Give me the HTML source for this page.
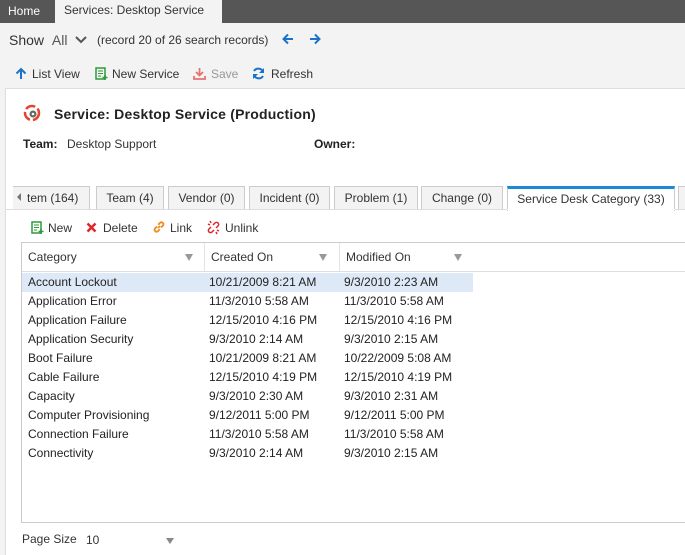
<!DOCTYPE html>
<html><head><style>
*{box-sizing:border-box;margin:0;padding:0}
body{width:685px;height:555px;overflow:hidden;font-family:"Liberation Sans",sans-serif;font-size:12px;color:#222;background:#f3f3f3;position:relative}
.abs{position:absolute;white-space:nowrap}
.top{left:0;top:0;width:685px;height:23px;background:#565656}
.panel{left:5px;top:88px;width:680px;height:467px;background:#fff;border-left:1px solid #ddd;border-top:1px solid #ddd}
.tab{position:absolute;top:186px;height:24px;border:1px solid #ccc;border-bottom:none;background:#f3f3f3;font-size:12px;line-height:22px;text-align:center;color:#333}
.grid{left:21px;top:242px;width:664px;height:281px;border:1px solid #ccc;border-right:none;background:#fff}
.hdr{position:absolute;top:0;height:29px;border-bottom:1px solid #ddd;line-height:29px;padding-left:6px;color:#333}
.row{position:absolute;left:0;height:19px;line-height:19px;width:451px}
.row span{position:absolute}
.filt{position:absolute;top:11px;width:0;height:0;border-left:4px solid transparent;border-right:4px solid transparent;border-top:7px solid #999}
</style></head><body>
<div class="abs top"></div>
<div class="abs" style="left:8px;top:4px;color:#fff;font-size:12px">Home</div>
<div class="abs" style="left:55px;top:0;width:167px;height:23px;background:#f3f3f3;padding:3px 9px;font-size:12px;color:#333">Services: Desktop Service</div>
<div class="abs" style="left:9px;top:32px;font-size:14px;color:#333">Show <span style="color:#555;margin-left:4px">All</span></div>
<svg class="abs" style="left:75px;top:36px" width="12" height="8"><path d="M1 1l5 5 5-5" stroke="#555" stroke-width="2" fill="none"/></svg>
<div class="abs" style="left:97px;top:33px;font-size:12px;color:#333">(record 20 of 26 search records)</div>
<svg class="abs" style="left:282px;top:33px" width="12" height="12"><path d="M11 6H2M6 1.5L1.5 6 6 10.5" stroke="#1a73c6" stroke-width="2" fill="none"/></svg>
<svg class="abs" style="left:309px;top:33px" width="12" height="12"><path d="M1 6h9M6 1.5L10.5 6 6 10.5" stroke="#1a73c6" stroke-width="2" fill="none"/></svg>
<svg class="abs" style="left:15px;top:67px" width="12" height="12"><path d="M6 12V2M1.5 6.5L6 2l4.5 4.5" stroke="#1a73c6" stroke-width="2" fill="none"/></svg>
<div class="abs" style="left:32px;top:67px;color:#333">List View</div>
<svg class="abs" style="left:95px;top:67px" width="13" height="13"><rect x="1" y="1" width="9" height="11" fill="none" stroke="#2e9a3a" stroke-width="1.5"/><path d="M3 4h5M3 6.5h5M3 9h3" stroke="#2e9a3a"/><path d="M10 8v5M7.5 10.5h5" stroke="#2e9a3a" stroke-width="1.6"/></svg>
<div class="abs" style="left:112px;top:67px;color:#333">New Service</div>
<svg class="abs" style="left:193px;top:67px" width="13" height="13"><path d="M6.5 1v7M3 5l3.5 3.5L10 5M1 9v3h11V9" stroke="#e57373" stroke-width="1.8" fill="none"/></svg>
<div class="abs" style="left:211px;top:67px;color:#999">Save</div>
<svg class="abs" style="left:252px;top:67px" width="13" height="13"><path d="M11 5A5 5 0 0 0 2 4M2 8a5 5 0 0 0 9 1" stroke="#1a73c6" stroke-width="2" fill="none"/><path d="M12 1v5H7zM1 12V7h5z" fill="#1a73c6"/></svg>
<div class="abs" style="left:271px;top:67px;color:#333">Refresh</div>
<div class="abs panel"></div>
<svg class="abs" style="left:23px;top:104px" width="18" height="18"><circle cx="9" cy="9" r="7" fill="none" stroke="#e2452b" stroke-width="2.5" stroke-dasharray="10 3"/><circle cx="10" cy="10" r="3.5" fill="#666"/><circle cx="10" cy="10" r="1.3" fill="#fff"/></svg>
<div class="abs" style="left:54px;top:106px;font-size:14px;font-weight:bold;color:#222;letter-spacing:.2px">Service: Desktop Service (Production)</div>
<div class="abs" style="left:23px;top:137px;font-weight:bold">Team:</div>
<div class="abs" style="left:67px;top:137px;color:#333">Desktop Support</div>
<div class="abs" style="left:314px;top:137px;font-weight:bold">Owner:</div>
<div class="tab" style="left:13px;width:77px;border-left:none;padding-left:14px;text-align:left">tem (164)</div>
<div class="abs" style="left:17px;top:193px;width:0;height:0;border-top:4px solid transparent;border-bottom:4px solid transparent;border-right:4px solid #777"></div>
<div class="tab" style="left:96px;width:68px">Team (4)</div>
<div class="tab" style="left:168px;width:77px">Vendor (0)</div>
<div class="tab" style="left:249px;width:81px">Incident (0)</div>
<div class="tab" style="left:334px;width:84px">Problem (1)</div>
<div class="tab" style="left:421px;width:82px">Change (0)</div>
<div class="tab" style="left:507px;width:168px;background:#fff;border-top:3px solid #1a8ad4;line-height:20px;height:25px">Service Desk Category (33)</div>
<div class="tab" style="left:678px;width:20px"></div>
<div class="abs" style="left:5px;top:209px;width:680px;height:1px;background:#ddd"></div>
<div class="abs" style="left:507px;top:209px;width:168px;height:1px;background:#fff"></div>
<svg class="abs" style="left:31px;top:221px" width="13" height="13"><rect x="1" y="1" width="9" height="11" fill="none" stroke="#2e9a3a" stroke-width="1.5"/><path d="M3 4h5M3 6.5h5M3 9h3" stroke="#2e9a3a"/><path d="M10 8v5M7.5 10.5h5" stroke="#2e9a3a" stroke-width="1.6"/></svg>
<div class="abs" style="left:48px;top:221px;color:#333">New</div>
<svg class="abs" style="left:86px;top:222px" width="11" height="11"><path d="M1.5 1.5l8 8M9.5 1.5l-8 8" stroke="#e0242a" stroke-width="2.4"/></svg>
<div class="abs" style="left:103px;top:221px;color:#333">Delete</div>
<svg class="abs" style="left:152px;top:220px" width="14" height="14"><path d="M6 8l2-2M5 6.5l-2 2a2 2 0 0 0 2.8 2.8l2-2M9 7.5l2-2A2 2 0 0 0 8.2 2.7l-2 2" stroke="#f08a1a" stroke-width="1.8" fill="none"/></svg>
<div class="abs" style="left:170px;top:221px;color:#333">Link</div>
<svg class="abs" style="left:206px;top:220px" width="15" height="15"><path d="M5 7l-2 2a2 2 0 0 0 3 3l2-2M10 8l2-2a2 2 0 0 0-3-3l-2 2M2 4l2 1M4 1l1 2M13 11l-2-1M11 14l-1-2" stroke="#e0242a" stroke-width="1.5" fill="none"/></svg>
<div class="abs" style="left:225px;top:221px;color:#333">Unlink</div>
<div class="abs grid">
<div class="hdr" style="left:0;width:183px;border-right:1px solid #e4e4e4">Category</div><div class="filt" style="left:163px"></div>
<div class="hdr" style="left:183px;width:135px;border-right:1px solid #e4e4e4">Created On</div><div class="filt" style="left:297px"></div>
<div class="hdr" style="left:318px;width:346px">Modified On</div><div class="filt" style="left:432px"></div>
<div class="row" style="top:30px;background:#dde9f7"><span style="left:6px">Account Lockout</span><span style="left:187px">10/21/2009 8:21 AM</span><span style="left:322px">9/3/2010 2:23 AM</span></div>
<div class="row" style="top:49px"><span style="left:6px">Application Error</span><span style="left:187px">11/3/2010 5:58 AM</span><span style="left:322px">11/3/2010 5:58 AM</span></div>
<div class="row" style="top:68px"><span style="left:6px">Application Failure</span><span style="left:187px">12/15/2010 4:16 PM</span><span style="left:322px">12/15/2010 4:16 PM</span></div>
<div class="row" style="top:87px"><span style="left:6px">Application Security</span><span style="left:187px">9/3/2010 2:14 AM</span><span style="left:322px">9/3/2010 2:15 AM</span></div>
<div class="row" style="top:106px"><span style="left:6px">Boot Failure</span><span style="left:187px">10/21/2009 8:21 AM</span><span style="left:322px">10/22/2009 5:08 AM</span></div>
<div class="row" style="top:125px"><span style="left:6px">Cable Failure</span><span style="left:187px">12/15/2010 4:19 PM</span><span style="left:322px">12/15/2010 4:19 PM</span></div>
<div class="row" style="top:144px"><span style="left:6px">Capacity</span><span style="left:187px">9/3/2010 2:30 AM</span><span style="left:322px">9/3/2010 2:31 AM</span></div>
<div class="row" style="top:163px"><span style="left:6px">Computer Provisioning</span><span style="left:187px">9/12/2011 5:00 PM</span><span style="left:322px">9/12/2011 5:00 PM</span></div>
<div class="row" style="top:182px"><span style="left:6px">Connection Failure</span><span style="left:187px">11/3/2010 5:58 AM</span><span style="left:322px">11/3/2010 5:58 AM</span></div>
<div class="row" style="top:201px"><span style="left:6px">Connectivity</span><span style="left:187px">9/3/2010 2:14 AM</span><span style="left:322px">9/3/2010 2:15 AM</span></div>
</div>
<div class="abs" style="left:22px;top:532px;color:#333">Page Size</div>
<div class="abs" style="left:86px;top:533px;color:#333">10</div>
<div class="abs" style="left:166px;top:538px;width:0;height:0;border-left:4px solid transparent;border-right:4px solid transparent;border-top:6px solid #888"></div>
</body></html>
